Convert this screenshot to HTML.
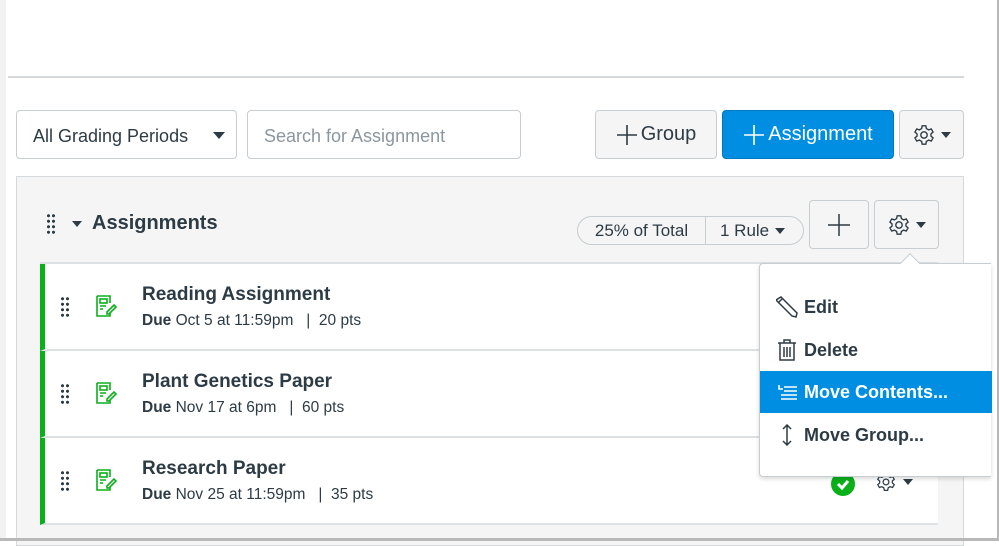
<!DOCTYPE html>
<html><head><meta charset="utf-8"><style>
*{box-sizing:border-box;margin:0;padding:0}
body{width:999px;height:541px;overflow:hidden;background:#fff;font-family:"Liberation Sans",sans-serif;color:#2d3b45;position:relative}
.a{position:absolute}
.btn{position:absolute;border:1px solid #c7cdd1;border-radius:4px;background:#f5f5f5;display:flex;align-items:center;justify-content:center;font-size:20px;color:#2d3b45}
.row{position:absolute;left:40px;width:898px;height:87px;background:#fff;border-bottom:2px solid #dde1e4;border-left:5px solid #0ab01a}
.dots{position:absolute;width:10px;height:22px;background-image:radial-gradient(circle,#2d3b45 1.4px,transparent 1.7px);background-size:5px 5.5px}
.title{position:absolute;font-size:19px;font-weight:bold;color:#2d3b45}
.sub{position:absolute;font-size:15.5px;color:#2d3b45}
.mi{position:absolute;left:0;width:232px;height:42px;display:flex;align-items:center;padding-left:16px;font-size:18px;font-weight:bold;color:#2d3b45}
.mi svg{margin-right:6px}
</style></head><body>
<div class="a" style="left:0;top:0;width:6px;height:541px;background:#f2f2f2"></div>
<div class="a" style="left:8px;top:76px;width:956px;height:2px;background:#d5d9dc"></div>

<div class="a" style="left:16px;top:110px;width:221px;height:49px;border:1px solid #c7cdd1;border-radius:4px;font-size:18px;padding:15px 0 0 16px">All Grading Periods<span class="a" style="left:196px;top:21px;border-left:6px solid transparent;border-right:6px solid transparent;border-top:7px solid #2d3b45"></span></div>
<div class="a" style="left:247px;top:110px;width:274px;height:49px;border:1px solid #c7cdd1;border-radius:4px;font-size:18px;padding:15px 0 0 16px;color:#8b969e">Search for Assignment</div>
<div class="btn" style="left:595px;top:110px;width:122px;height:49px"><svg width="22" height="22" viewBox="0 0 22 22" stroke="#2d3b45" stroke-width="1.6"><path d="M11 1v20M1 11h20"/></svg><span style="margin-left:3px">Group</span></div>
<div class="btn" style="left:722px;top:110px;width:172px;height:49px;background:#008ee2;border-color:#0079c1;color:#fff"><svg width="22" height="22" viewBox="0 0 22 22" stroke="#fff" stroke-width="1.6"><path d="M11 1v20M1 11h20"/></svg><span style="margin-left:3px">Assignment</span></div>
<div class="btn" style="left:899px;top:110px;width:65px;height:49px"><svg width="22" height="22" viewBox="0 0 24 24" fill="none" stroke="#2d3b45" stroke-width="1.5"><path d="M10 2h4l.6 3 2.4 1.4 2.9-1 2 3.4-2.3 2v2.4l2.3 2-2 3.4-2.9-1-2.4 1.4-.6 3h-4l-.6-3-2.4-1.4-2.9 1-2-3.4 2.3-2v-2.4l-2.3-2 2-3.4 2.9 1L9.4 5z"/><circle cx="12" cy="12" r="3.5"/></svg><span style="margin-left:6px;border-left:5px solid transparent;border-right:5px solid transparent;border-top:6px solid #2d3b45"></span></div>

<div class="a" style="left:16px;top:176px;width:948px;height:370px;background:#f5f5f5;border:1px solid #d5d9dc"></div>
<div class="dots" style="left:46px;top:213px"></div>
<div class="a" style="left:72px;top:221px;border-left:5px solid transparent;border-right:5px solid transparent;border-top:6px solid #2d3b45"></div>
<div class="a" style="left:92px;top:212px;font-size:20px;font-weight:bold">Assignments</div>
<div class="a" style="left:577px;top:216px;width:227px;height:29px;border:1px solid #c7cdd1;border-radius:15px;background:#f5f5f5;font-size:17px;display:flex;align-items:center">
<span style="width:128px;text-align:center;border-right:1px solid #c7cdd1;height:27px;line-height:27px">25% of Total</span><span style="padding-left:14px">1 Rule</span><span style="margin-left:6px;border-left:5px solid transparent;border-right:5px solid transparent;border-top:6px solid #2d3b45"></span></div>
<div class="btn" style="left:809px;top:200px;width:60px;height:49px"><svg width="24" height="24" viewBox="0 0 24 24" stroke="#2d3b45" stroke-width="1.5"><path d="M12 1v22M1 12h22"/></svg></div>
<div class="btn" style="left:874px;top:200px;width:65px;height:49px"><svg width="22" height="22" viewBox="0 0 24 24" fill="none" stroke="#2d3b45" stroke-width="1.5"><path d="M10 2h4l.6 3 2.4 1.4 2.9-1 2 3.4-2.3 2v2.4l2.3 2-2 3.4-2.9-1-2.4 1.4-.6 3h-4l-.6-3-2.4-1.4-2.9 1-2-3.4 2.3-2v-2.4l-2.3-2 2-3.4 2.9 1L9.4 5z"/><circle cx="12" cy="12" r="3.5"/></svg><span style="margin-left:6px;border-left:5px solid transparent;border-right:5px solid transparent;border-top:6px solid #2d3b45"></span></div>

<div class="a" style="left:40px;top:262px;width:898px;height:2px;background:#dde1e4"></div>
<div class="row" style="top:264px"></div>
<div class="row" style="top:351px"></div>
<div class="row" style="top:438px"></div>

<div class="dots" style="left:60px;top:296px"></div>
<div class="dots" style="left:60px;top:383px"></div>
<div class="dots" style="left:60px;top:470px"></div>

<svg class="a" style="left:95px;top:295px" width="22" height="22" viewBox="0 0 22 22" fill="none" stroke="#0ab01a" stroke-width="1.6"><path d="M2 1h13v7M2 1v20h13v-3"/><rect x="5" y="4" width="7" height="4"/><path d="M5 11h6M5 14h3M12 17l7-7 2 2-7 7h-2z"/></svg>
<svg class="a" style="left:95px;top:382px" width="22" height="22" viewBox="0 0 22 22" fill="none" stroke="#0ab01a" stroke-width="1.6"><path d="M2 1h13v7M2 1v20h13v-3"/><rect x="5" y="4" width="7" height="4"/><path d="M5 11h6M5 14h3M12 17l7-7 2 2-7 7h-2z"/></svg>
<svg class="a" style="left:95px;top:469px" width="22" height="22" viewBox="0 0 22 22" fill="none" stroke="#0ab01a" stroke-width="1.6"><path d="M2 1h13v7M2 1v20h13v-3"/><rect x="5" y="4" width="7" height="4"/><path d="M5 11h6M5 14h3M12 17l7-7 2 2-7 7h-2z"/></svg>

<div class="title" style="left:142px;top:284px">Reading Assignment</div>
<div class="sub" style="left:142px;top:312px"><b>Due</b> Oct 5 at 11:59pm &nbsp;&nbsp;| &nbsp;20 pts</div>
<div class="title" style="left:142px;top:371px">Plant Genetics Paper</div>
<div class="sub" style="left:142px;top:399px"><b>Due</b> Nov 17 at 6pm &nbsp;&nbsp;| &nbsp;60 pts</div>
<div class="title" style="left:142px;top:458px">Research Paper</div>
<div class="sub" style="left:142px;top:486px"><b>Due</b> Nov 25 at 11:59pm &nbsp;&nbsp;| &nbsp;35 pts</div>

<div class="a" style="left:831px;top:472px;width:24px;height:24px;border-radius:50%;background:#0ab01a"></div>
<svg class="a" style="left:831px;top:472px" width="24" height="24" viewBox="0 0 24 24" fill="none" stroke="#fff" stroke-width="3"><path d="M7 12l4 4 6-7"/></svg>
<svg class="a" style="left:876px;top:472px" width="20" height="20" viewBox="0 0 24 24" fill="none" stroke="#2d3b45" stroke-width="1.5"><path d="M10 2h4l.6 3 2.4 1.4 2.9-1 2 3.4-2.3 2v2.4l2.3 2-2 3.4-2.9-1-2.4 1.4-.6 3h-4l-.6-3-2.4-1.4-2.9 1-2-3.4 2.3-2v-2.4l-2.3-2 2-3.4 2.9 1L9.4 5z"/><circle cx="12" cy="12" r="3.5"/></svg>
<div class="a" style="left:903px;top:479px;border-left:5px solid transparent;border-right:5px solid transparent;border-top:6px solid #2d3b45"></div>

<div class="a" style="left:759px;top:263px;width:232px;height:214px;background:#fff;border:1px solid #c7cdd1;border-right:none;border-radius:4px 0 0 4px;box-shadow:0 2px 4px rgba(0,0,0,.15)">
<div class="mi" style="top:22px"><svg width="22" height="22" viewBox="0 0 22 22" fill="none" stroke="#2d3b45" stroke-width="1.5"><path d="M5 1l16 16-1 4-4-1L0 4z M3 6l3-3"/></svg>Edit</div>
<div class="mi" style="top:65px"><svg width="22" height="22" viewBox="0 0 22 22" fill="none" stroke="#2d3b45" stroke-width="1.5"><path d="M2 4h18M8 4V1h6v3M4 4v17h14V4M8 8v10M11 8v10M14 8v10"/></svg>Delete</div>
<div class="mi" style="top:107px;background:#008ee2;color:#fff"><svg width="22" height="22" viewBox="0 0 22 22" fill="none" stroke="#fff" stroke-width="1.5"><path d="M3 4v4h4M8 6h13M8 10h13M5 14h16M5 18h16"/></svg>Move Contents...</div>
<div class="mi" style="top:150px"><svg width="22" height="22" viewBox="0 0 22 22" fill="none" stroke="#2d3b45" stroke-width="1.5"><path d="M11 1v20M7 5l4-4 4 4M7 17l4 4 4-4"/></svg>Move Group...</div>
</div>
<div class="a" style="left:903px;top:256px;width:14px;height:14px;background:#fff;border-left:1px solid #c7cdd1;border-top:1px solid #c7cdd1;transform:rotate(45deg)"></div>

<div class="a" style="left:997px;top:0;width:2px;height:541px;background:#b8b8b8"></div>
<div class="a" style="left:0;top:538px;width:999px;height:3px;background:#b8b8b8"></div>
</body></html>
